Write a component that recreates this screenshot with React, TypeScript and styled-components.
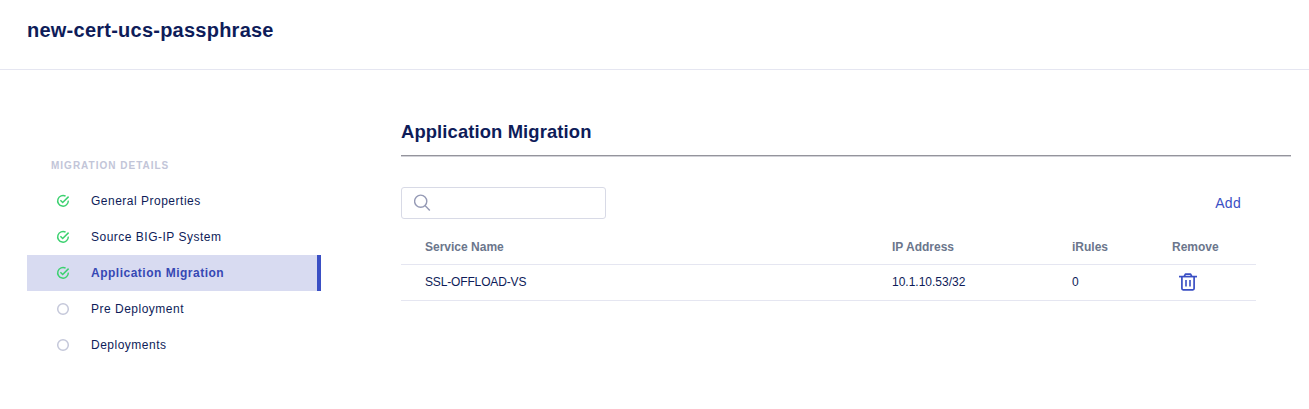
import React from "react";
import styled, { createGlobalStyle } from "styled-components";

const GlobalStyle = createGlobalStyle`
  *, *::before, *::after { box-sizing: border-box; }
  body {
    margin: 0;
    background: #fff;
    color: #0e1c59;
    font-family: "Liberation Sans", Arial, sans-serif;
  }
`;

const Page = styled.div`
  min-height: 409px;
`;

const Header = styled.header`
  height: 70px;
  padding: 18px 27px 0;
  border-bottom: 1px solid #e5e6f1;
`;

const PageTitle = styled.h1`
  margin: 0;
  font-size: 20px;
  line-height: 24px;
  font-weight: 700;
  letter-spacing: 0.24px;
`;

const Body = styled.div`
  display: flex;
  gap: 80px;
  padding: 0 18px 0 27px;
`;

const Sidebar = styled.nav`
  width: 294px;
  flex: none;
  padding-top: 89px;
`;

const SidebarHeading = styled.div`
  height: 24px;
  padding-left: 24px;
  font-size: 10px;
  line-height: 14px;
  font-weight: 700;
  letter-spacing: 1px;
  color: #c2c5d8;
`;

const StepList = styled.ul`
  list-style: none;
  margin: 0;
  padding: 0;
`;

const Step = styled.li<{ $active?: boolean }>`
  display: flex;
  align-items: center;
  height: 36px;
  padding-left: 29px;
  gap: 21px;
  font-size: 12px;
  line-height: 16px;
  letter-spacing: 0.5px;
  white-space: nowrap;
  font-weight: ${(p) => (p.$active ? 700 : 400)};
  color: ${(p) => (p.$active ? "#3648b4" : "#0e1c59")};
  background: ${(p) => (p.$active ? "#d8dbf1" : "transparent")};
  border-right: 4px solid ${(p) => (p.$active ? "#3a4fc4" : "transparent")};
`;

const Content = styled.main`
  flex: 1;
  padding-top: 50px;
`;

const SectionTitle = styled.h2`
  margin: 0;
  height: 35px;
  font-size: 18.4px;
  line-height: 24px;
  font-weight: 700;
  letter-spacing: 0.12px;
`;

const Divider = styled.div`
  height: 2px;
  border-top: 1px solid #94949c;
  border-bottom: 1px solid #d2d2d8;
`;

const Toolbar = styled.div`
  display: flex;
  align-items: center;
  justify-content: space-between;
  margin-top: 30px;
  padding-right: 50px;
`;

const SearchBox = styled.label`
  display: flex;
  align-items: center;
  width: 205px;
  height: 32px;
  padding-left: 12px;
  border: 1px solid #d8dae6;
  border-radius: 3px;
`;

const SearchInput = styled.input`
  flex: 1;
  min-width: 0;
  margin-left: 8px;
  border: 0;
  outline: 0;
  background: transparent;
  font: inherit;
`;

const AddButton = styled.button`
  padding: 0;
  border: 0;
  background: none;
  font-family: inherit;
  font-size: 14px;
  line-height: 20px;
  letter-spacing: 0.3px;
  color: #3a4fc4;
`;

const Table = styled.div`
  width: 855px;
  margin-top: 10px;
`;

const Row = styled.div<{ $head?: boolean }>`
  display: grid;
  grid-template-columns: 467px 180px 100px 1fr;
  align-items: center;
  height: 36px;
  padding-left: 24px;
  padding-bottom: ${(p) => (p.$head ? 0 : 2)}px;
  border-bottom: 1px solid #e5e6f1;
  font-size: 12px;
  font-weight: ${(p) => (p.$head ? 700 : 400)};
  color: ${(p) => (p.$head ? "#6b768c" : "#0e1c59")};
`;

const Cell = styled.span<{ $spacing?: number }>`
  letter-spacing: ${(p) => p.$spacing ?? 0}px;
  line-height: 16px;
`;

const RemoveButton = styled.button`
  display: flex;
  width: 18px;
  height: 18px;
  margin-left: 7px;
  padding: 0;
  border: 0;
  background: none;
`;

const CheckIcon = () => (
  <svg width="14" height="14" viewBox="0 0 14 14" fill="none" stroke="#3bd16f" strokeWidth="1.5">
    <path d="M9.6 2.2A5.3 5.3 0 1 0 12.3 6.6" />
    <path d="M4.4 6.2 6.7 8.5 12.6 2.6" />
  </svg>
);

const EmptyIcon = () => (
  <svg width="14" height="14" viewBox="0 0 14 14" fill="none" stroke="#c5c8da" strokeWidth="1.5">
    <circle cx="7" cy="7" r="5.3" />
  </svg>
);

const SearchIcon = () => (
  <svg width="18" height="18" viewBox="0 0 18 18" fill="none" stroke="#959ab5" strokeWidth="1.4">
    <circle cx="6.7" cy="7.2" r="6.1" />
    <path d="M11 11.5 15.8 16.6" />
  </svg>
);

const TrashIcon = () => (
  <svg width="18" height="18" viewBox="0 0 18 18" fill="none" stroke="#3a4fc4" strokeWidth="1.7">
    <path d="M0 3.6H18" />
    <path d="M5.3 3.4 6.4 1.2H11.6L12.7 3.4" strokeLinejoin="round" />
    <path d="M2.9 3.6V15.6Q2.9 16.8 4.1 16.8H13.9Q15.1 16.8 15.1 15.6V3.6" />
    <path d="M7 7V13.5M11 7V13.5" strokeWidth="1.6" />
  </svg>
);

const steps = [
  { label: "General Properties", done: true },
  { label: "Source BIG-IP System", done: true },
  { label: "Application Migration", done: true, active: true },
  { label: "Pre Deployment", done: false },
  { label: "Deployments", done: false },
];

export default function App() {
  return (
    <Page>
      <GlobalStyle />
      <Header>
        <PageTitle>new-cert-ucs-passphrase</PageTitle>
      </Header>
      <Body>
        <Sidebar>
          <SidebarHeading>MIGRATION DETAILS</SidebarHeading>
          <StepList>
            {steps.map((s) => (
              <Step key={s.label} $active={s.active}>
                {s.done ? <CheckIcon /> : <EmptyIcon />}
                <span>{s.label}</span>
              </Step>
            ))}
          </StepList>
        </Sidebar>
        <Content>
          <SectionTitle>Application Migration</SectionTitle>
          <Divider />
          <Toolbar>
            <SearchBox>
              <SearchIcon />
              <SearchInput aria-label="Search" />
            </SearchBox>
            <AddButton>Add</AddButton>
          </Toolbar>
          <Table>
            <Row $head>
              <Cell>Service Name</Cell>
              <Cell>IP Address</Cell>
              <Cell>iRules</Cell>
              <Cell>Remove</Cell>
            </Row>
            <Row>
              <Cell $spacing={-0.15}>SSL-OFFLOAD-VS</Cell>
              <Cell>10.1.10.53/32</Cell>
              <Cell>0</Cell>
              <RemoveButton aria-label="Remove">
                <TrashIcon />
              </RemoveButton>
            </Row>
          </Table>
        </Content>
      </Body>
    </Page>
  );
}
